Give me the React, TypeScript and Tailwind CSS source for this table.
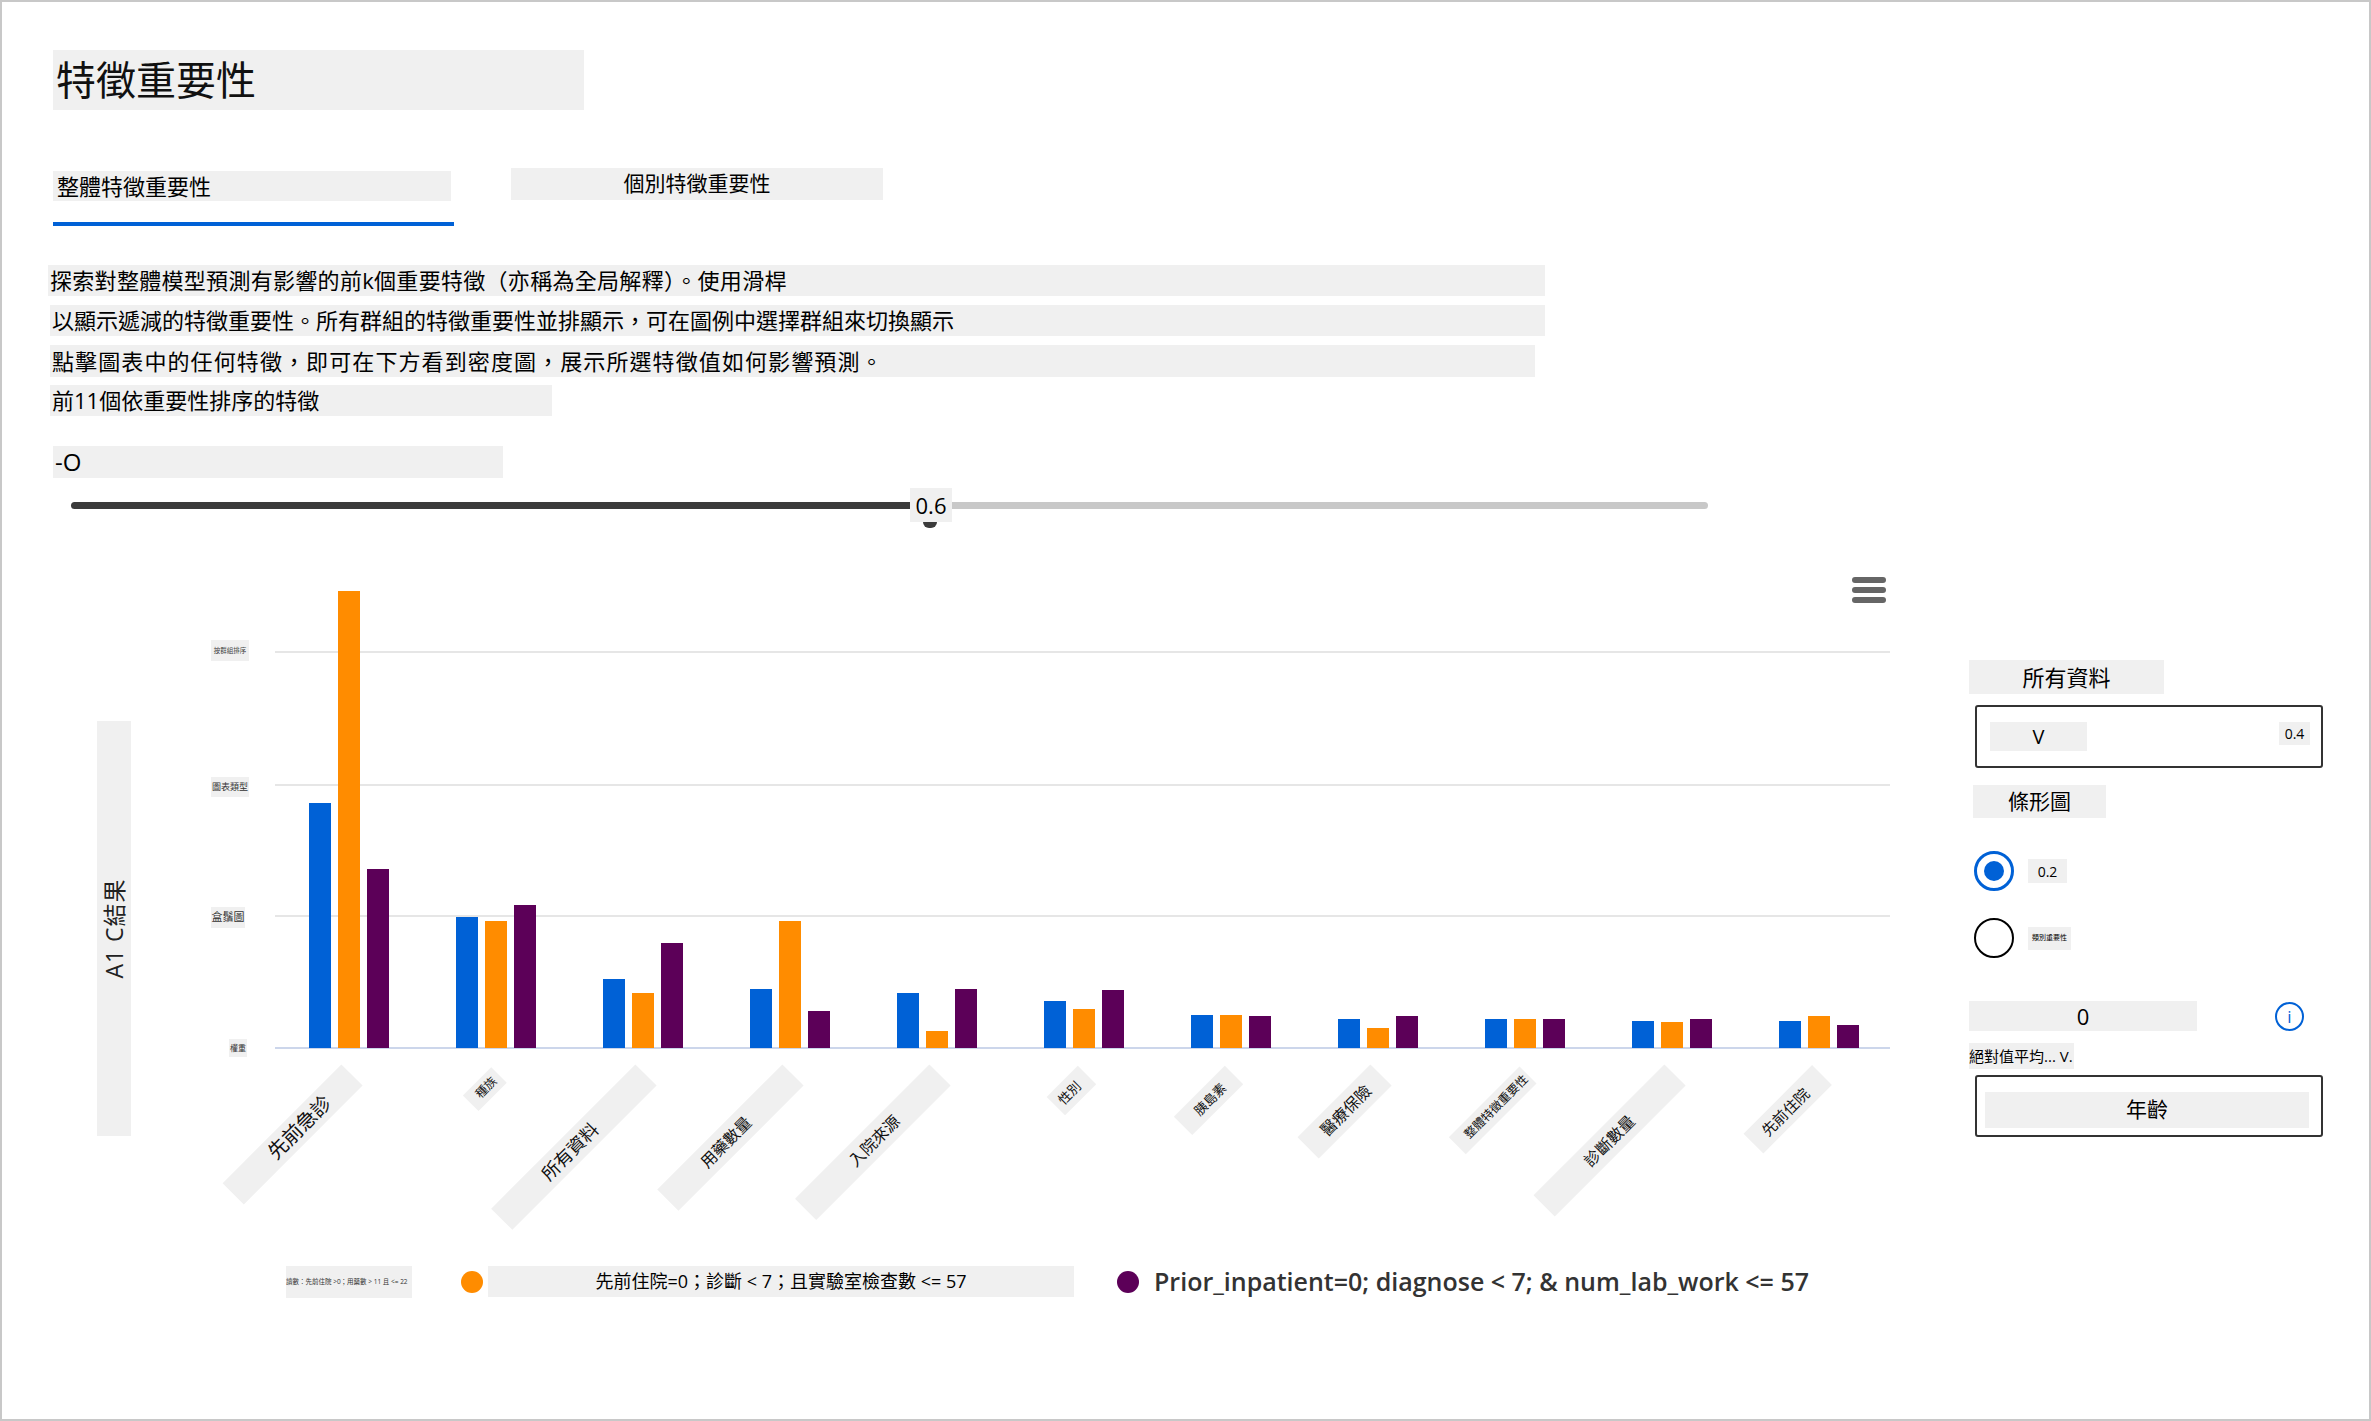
const groups = [
  { label: "先前急診", vals: [245, 457, 179], L: 168, T: 30, fs: 20, d: 74 },
  { label: "種族", vals: [131, 127, 143], L: 40, T: 22, fs: 12, d: 18 },
  { label: "所有資料", vals: [69, 55, 105], L: 204, T: 30, fs: 18, d: 108 },
  { label: "用藥數量", vals: [59, 127, 37], L: 177, T: 30, fs: 16, d: 95 },
  { label: "入院來源", vals: [55, 17, 59], L: 190, T: 30, fs: 16, d: 93 },
  { label: "性別", vals: [47, 39, 58], L: 44, T: 26, fs: 13, d: 25 },
  { label: "胰島素", vals: [33, 33, 32], L: 72, T: 26, fs: 13, d: 34 },
  { label: "醫療保險", vals: [29, 20, 32], L: 103, T: 30, fs: 16, d: 50 },
  { label: "整體特徵重要性", vals: [29, 29, 29], L: 100, T: 24, fs: 12, d: 45 },
  { label: "診斷數量", vals: [27, 26, 29], L: 185, T: 30, fs: 16, d: 93 },
  { label: "先前住院", vals: [27, 32, 23], L: 97, T: 28, fs: 15, d: 52 },
];

const barColors = ["bg-[#0061d6]", "bg-[#ff8c00]", "bg-[#5c0058]"];

const paragraph = [
  { text: "探索對整體模型預測有影響的前k個重要特徵（亦稱為全局解釋）。使用滑桿", cls: "ml-[46px] w-[1497px] h-[31px] tracking-[0.3px]" },
  { text: "以顯示遞減的特徵重要性。所有群組的特徵重要性並排顯示，可在圖例中選擇群組來切換顯示", cls: "mt-[9px] ml-[48px] w-[1495px] h-[31px]" },
  { text: "點擊圖表中的任何特徵，即可在下方看到密度圖，展示所選特徵值如何影響預測。", cls: "mt-[9px] ml-[48px] w-[1485px] h-[32px] tracking-[1.1px]" },
  { text: "前11個依重要性排序的特徵", cls: "mt-[8px] ml-[48px] w-[502px] h-[31px]" },
];

function Chart() {
  return (
    <div className="relative w-[1940px] h-[700px] shrink-0">
      {/* menu */}
      <div className="absolute left-[1850px] top-[17px] flex flex-col gap-[4px]">
        <div className="h-[6px] w-[34px] rounded-full bg-[#666]" />
        <div className="h-[6px] w-[34px] rounded-full bg-[#666]" />
        <div className="h-[6px] w-[34px] rounded-full bg-[#666]" />
      </div>

      {/* grid */}
      <div className="absolute left-[273px] top-[91px] h-[2px] w-[1615px] bg-[#e6e6e6]" />
      <div className="absolute left-[273px] top-[224px] h-[2px] w-[1615px] bg-[#e6e6e6]" />
      <div className="absolute left-[273px] top-[355px] h-[2px] w-[1615px] bg-[#e6e6e6]" />
      <div className="absolute left-[273px] top-[487px] h-[2px] w-[1615px] bg-[#ccd6eb]" />

      {/* y axis title */}
      <div className="absolute left-[95px] top-[161px] flex h-[415px] w-[34px] items-center justify-center bg-[#f0f0f0]">
        <span className="-rotate-90 whitespace-nowrap text-[23px] leading-none tracking-[1px] text-[#222]">A1 C結果</span>
      </div>

      {/* y labels */}
      <div className="absolute left-[209px] top-[80px] flex h-[21px] w-[38px] items-center justify-center bg-[#f0f0f0] text-[6.5px] text-[#444] whitespace-nowrap">按群組排序</div>
      <div className="absolute left-[209px] top-[217px] flex h-[20px] w-[38px] items-center justify-center bg-[#f0f0f0] text-[9px] text-[#333] whitespace-nowrap">圖表類型</div>
      <div className="absolute left-[209px] top-[347px] flex h-[21px] w-[34px] items-center justify-center bg-[#f0f0f0] text-[11px] text-[#333] whitespace-nowrap">盒鬚圖</div>
      <div className="absolute left-[227px] top-[479px] flex h-[18px] w-[18px] items-center justify-center bg-[#f0f0f0] text-[8px] text-[#333] whitespace-nowrap">權重</div>

      {/* bars */}
      <div className="absolute left-[273px] top-0 flex h-[488px] w-[1617px] items-end">
        {groups.map((g) => (
          <div key={g.label} className="flex w-[147px] shrink-0 items-end justify-center gap-[7px]">
            {g.vals.map((v, j) => (
              <div key={j} className={`w-[22px] ${barColors[j]}`} style={{ height: v }} />
            ))}
          </div>
        ))}
      </div>

      {/* x labels */}
      {groups.map((g, i) => {
        const cx = 350 + 147 * i;
        const pr = Math.max(0, g.d - (g.label.length * g.fs) / 2);
        return (
          <div
            key={g.label}
            className="absolute flex origin-right -rotate-45 items-center justify-end bg-[#f0f0f0]"
            style={{ left: cx - g.L, top: 515 - g.T / 2, width: g.L, height: g.T }}
          >
            <span className="whitespace-nowrap leading-none text-[#111]" style={{ fontSize: g.fs, marginRight: pr }}>
              {g.label}
            </span>
          </div>
        );
      })}
    </div>
  );
}

function RightPanel() {
  return (
    <div className="flex flex-1 flex-col items-start">
      <div className="ml-[27px] mt-[100px] flex h-[34px] w-[195px] items-center justify-center bg-[#f0f0f0] text-[22px]">所有資料</div>

      <div className="ml-[33px] mt-[11px] flex h-[63px] w-[348px] items-center justify-between rounded-[3px] border-2 border-[#333]">
        <div className="ml-[13px] flex h-[29px] w-[97px] items-center justify-center bg-[#f0f0f0] text-[20px]">V</div>
        <div className="mr-[11px] mb-[6px] flex h-[23px] w-[31px] items-center justify-center bg-[#f0f0f0] text-[14px]">0.4</div>
      </div>

      <div className="ml-[31px] mt-[17px] flex h-[33px] w-[133px] items-center justify-center bg-[#f0f0f0] text-[21px]">條形圖</div>

      <div className="ml-[32px] mt-[33px] flex items-center">
        <div className="flex h-[40px] w-[40px] items-center justify-center rounded-full border-[3px] border-[#0061d6]">
          <div className="h-[20px] w-[20px] rounded-full bg-[#0061d6]" />
        </div>
        <div className="ml-[14px] flex h-[24px] w-[39px] items-center justify-center bg-[#f0f0f0] text-[14px]">0.2</div>
      </div>

      <div className="ml-[32px] mt-[27px] flex items-center">
        <div className="h-[40px] w-[40px] rounded-full border-2 border-black" />
        <div className="ml-[14px] flex h-[23px] w-[43px] items-center justify-center bg-[#f0f0f0] text-[7px] whitespace-nowrap">類別重要性</div>
      </div>

      <div className="ml-[27px] mt-[43px] flex items-center">
        <div className="flex h-[30px] w-[228px] items-center justify-center bg-[#f0f0f0] text-[22px]">0</div>
        <div className="ml-[78px] flex h-[29px] w-[29px] items-center justify-center rounded-full border-2 border-[#0061d6] text-[17px] leading-none text-[#0061d6]">i</div>
      </div>

      <div className="ml-[27px] mt-[12px] flex h-[26px] w-[105px] items-center bg-[#f0f0f0] text-[15px] whitespace-nowrap">絕對值平均... V.</div>

      <div className="ml-[33px] mt-[6px] flex h-[62px] w-[348px] items-start rounded-[3px] border-2 border-[#333] pl-[8px] pt-[15px]">
        <div className="flex h-[36px] w-[324px] items-center justify-center bg-[#f0f0f0] text-[21px]">年齡</div>
      </div>
    </div>
  );
}

export default function App() {
  return (
    <div className="h-[1421px] w-[2371px] overflow-hidden border-2 border-[#c8c8c8] bg-white font-['Open_Sans','Noto_Sans_CJK_TC',sans-serif] text-black">
      {/* title */}
      <div className="ml-[51px] mt-[48px] flex h-[60px] w-[531px] items-center bg-[#f0f0f0] pl-[3px] text-[40px] leading-none text-[#111]">
        特徵重要性
      </div>

      {/* tabs */}
      <div className="ml-[51px] mt-[58px] flex items-start">
        <div className="flex flex-col">
          <div className="mt-[3px] flex h-[30px] w-[398px] items-center bg-[#f0f0f0] pl-[4px] text-[22px]">整體特徵重要性</div>
          <div className="mt-[21px] h-[4px] w-[401px] bg-[#0061d6]" />
        </div>
        <div className="ml-[57px] flex h-[32px] w-[372px] items-center justify-center bg-[#f0f0f0] text-[21px]">個別特徵重要性</div>
      </div>

      {/* description */}
      <div className="mt-[39px] flex flex-col">
        {paragraph.map((p) => (
          <div key={p.text} className={`flex items-center bg-[#f0f0f0] pl-[2px] text-[22px] whitespace-nowrap ${p.cls}`}>
            {p.text}
          </div>
        ))}
      </div>

      <div className="ml-[51px] mt-[30px] flex h-[32px] w-[450px] items-center bg-[#f0f0f0] pl-[2px] text-[24px]">-O</div>

      {/* slider */}
      <div className="ml-[69px] mt-[10px] flex h-[34px] items-center">
        <div className="h-[7px] w-[839px] rounded-l-full bg-[#3b3b3b]" />
        <div className="relative flex h-[34px] w-[42px] items-center justify-center bg-[#f0f0f0] text-[22px]">
          0.6
          <div className="absolute left-[13px] top-[34px] h-[6px] w-[14px] rounded-b-full bg-[#3b3b3b]" />
        </div>
        <div className="h-[7px] w-[756px] rounded-r-full bg-[#c8c8c8]" />
      </div>

      {/* chart + side controls */}
      <div className="mt-[38px] flex">
        <Chart />
        <RightPanel />
      </div>

      {/* legend */}
      <div className="mt-[3px] flex items-center">
        <div className="ml-[284px] flex h-[32px] w-[126px] items-center bg-[#f0f0f0] text-[6.5px] whitespace-nowrap text-[#333]">
          讀數：先前住院 &gt;0；用藥數 &gt; 11 且 &lt;= 22
        </div>
        <div className="ml-[49px] h-[22px] w-[22px] rounded-full bg-[#ff8c00]" />
        <div className="ml-[5px] flex h-[31px] w-[586px] items-center justify-center bg-[#f0f0f0] text-[18px] whitespace-nowrap">
          先前住院=0；診斷 &lt; 7；且實驗室檢查數 &lt;= 57
        </div>
        <div className="ml-[43px] h-[22px] w-[22px] rounded-full bg-[#5c0058]" />
        <div className="ml-[15px] text-[25px] font-semibold whitespace-nowrap text-[#333]">
          Prior_inpatient=0; diagnose &lt; 7; &amp; num_lab_work &lt;= 57
        </div>
      </div>
    </div>
  );
}
